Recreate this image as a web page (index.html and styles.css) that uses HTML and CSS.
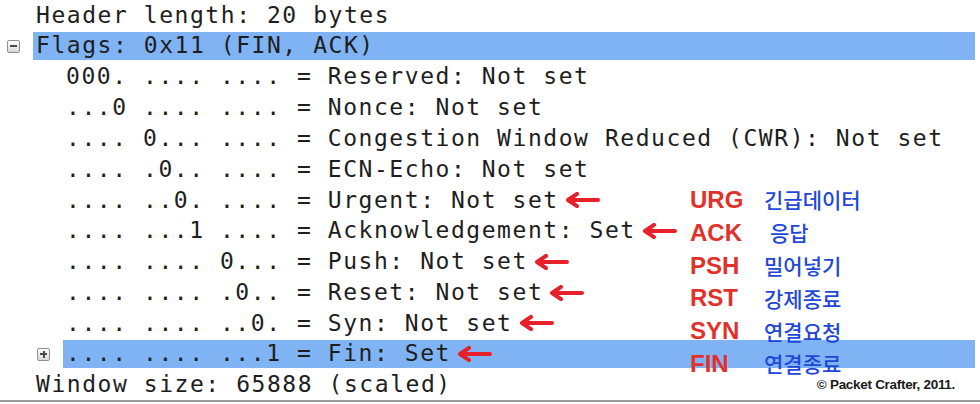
FILE: index.html
```html
<!DOCTYPE html>
<html lang="ko">
<head>
<meta charset="utf-8">
<title>TCP Flags</title>
<link rel="stylesheet" href="styles.css">
</head>
<body>
<div class="page">
  <div class="tree">
    <div class="row"><span class="slot"></span><span class="label"><span class="t">Header length: 20 bytes</span></span></div>
    <div class="row"><span class="slot"><span class="tog minus"></span></span><span class="label sel"><span class="t">Flags: 0x11 (FIN, ACK)</span></span></div>
    <div class="row l1"><span class="slot"></span><span class="label"><span class="t">000. .... .... = Reserved: Not set</span></span></div>
    <div class="row l1"><span class="slot"></span><span class="label"><span class="t">...0 .... .... = Nonce: Not set</span></span></div>
    <div class="row l1"><span class="slot"></span><span class="label"><span class="t">.... 0... .... = Congestion Window Reduced (CWR): Not set</span></span></div>
    <div class="row l1"><span class="slot"></span><span class="label"><span class="t">.... .0.. .... = ECN-Echo: Not set</span></span></div>
    <div class="row l1"><span class="slot"></span><span class="label"><span class="t">.... ..0. .... = Urgent: Not set</span><svg class="arrow" viewBox="0 0 36 16"><path d="M34 8H5M13 1.8L4 8l9 6.2"/></svg></span></div>
    <div class="row l1"><span class="slot"></span><span class="label"><span class="t">.... ...1 .... = Acknowledgement: Set</span><svg class="arrow" viewBox="0 0 36 16"><path d="M34 8H5M13 1.8L4 8l9 6.2"/></svg></span></div>
    <div class="row l1"><span class="slot"></span><span class="label"><span class="t">.... .... 0... = Push: Not set</span><svg class="arrow" viewBox="0 0 36 16"><path d="M34 8H5M13 1.8L4 8l9 6.2"/></svg></span></div>
    <div class="row l1"><span class="slot"></span><span class="label"><span class="t">.... .... .0.. = Reset: Not set</span><svg class="arrow" viewBox="0 0 36 16"><path d="M34 8H5M13 1.8L4 8l9 6.2"/></svg></span></div>
    <div class="row l1"><span class="slot"></span><span class="label"><span class="t">.... .... ..0. = Syn: Not set</span><svg class="arrow" viewBox="0 0 36 16"><path d="M34 8H5M13 1.8L4 8l9 6.2"/></svg></span></div>
    <div class="row l1"><span class="slot"><span class="tog plus"></span></span><span class="label sel"><span class="t">.... .... ...1 = Fin: Set</span><svg class="arrow" viewBox="0 0 36 16"><path d="M34 8H5M13 1.8L4 8l9 6.2"/></svg></span></div>
    <div class="row"><span class="slot"></span><span class="label"><span class="t">Window size: 65888 (scaled)</span><span class="copy">© Packet Crafter, 2011.</span></span></div>
  </div>
  <div class="rule"></div>

  <div class="notes">
    <span class="abbr">URG</span><span class="ko">긴급데이터</span>
    <span class="abbr">ACK</span><span class="ko ko-ack">응답</span>
    <span class="abbr">PSH</span><span class="ko">밀어넣기</span>
    <span class="abbr">RST</span><span class="ko">강제종료</span>
    <span class="abbr">SYN</span><span class="ko">연결요청</span>
    <span class="abbr">FIN</span><span class="ko">연결종료</span>
  </div>
</div>
</body>
</html>
```

FILE: styles.css
```css
html, body {
  margin: 0;
  padding: 0;
  background: #ffffff;
}

.page {
  position: relative;
  width: 980px;
  height: 404px;
  overflow: hidden;
  background: #ffffff;
}

.tree {
  display: flex;
  flex-direction: column;
  padding-right: 5px;
  font-family: "DejaVu Sans Mono", "Liberation Mono", monospace;
  font-size: 23px;
  letter-spacing: 1.55px;
  color: #1e1e1e;
}

.row {
  display: flex;
  align-items: stretch;
  height: 30.8px;
}

.row.l1 {
  padding-left: 30px;
}

.slot {
  flex: 0 0 33px;
  display: flex;
  align-items: center;
  padding-left: 7px;
  box-sizing: border-box;
}

.label {
  flex: 1;
  display: flex;
  align-items: center;
  padding-left: 3px;
  white-space: pre;
}

.label.sel {
  background: #80b3f4;
  margin: 1px 0 2px;
}

.t {
  line-height: 1;
}

.arrow {
  width: 36px;
  height: 16px;
  margin-left: 5px;
  fill: none;
  stroke: #e8202a;
  stroke-width: 4;
  stroke-linecap: round;
  stroke-linejoin: round;
}

.tog {
  position: relative;
  width: 13px;
  height: 13px;
  box-sizing: border-box;
  border: 1px solid #909090;
  border-radius: 2px;
  background: linear-gradient(#ffffff, #d8d8d8);
}

.tog::before {
  content: "";
  position: absolute;
  left: 2px;
  top: 4.5px;
  width: 7px;
  height: 2px;
  background: #4a4a4a;
}

.tog.plus::after {
  content: "";
  position: absolute;
  left: 4.5px;
  top: 2px;
  width: 2px;
  height: 7px;
  background: #4a4a4a;
}

.copy {
  margin-left: auto;
  margin-right: 20px;
  font-family: "Liberation Sans", Arial, sans-serif;
  font-weight: bold;
  font-size: 13.5px;
  letter-spacing: -0.3px;
  color: #1a1a1a;
}

.rule {
  height: 2px;
  background: #9a9a9a;
}

.notes {
  position: absolute;
  left: 690px;
  top: 183.6px;
  display: grid;
  grid-template-columns: 74px auto;
  grid-auto-rows: 32.8px;
  align-items: center;
}

.abbr {
  font-family: "Liberation Sans", Arial, sans-serif;
  font-weight: bold;
  font-size: 24px;
  line-height: 1;
  color: #e2312b;
}

.ko {
  font-family: "Noto Sans CJK KR", "Noto Sans", sans-serif;
  font-weight: 500;
  font-size: 21px;
  line-height: 1;
  color: #1f48d8;
}

.ko-ack {
  padding-left: 6px;
}
```
